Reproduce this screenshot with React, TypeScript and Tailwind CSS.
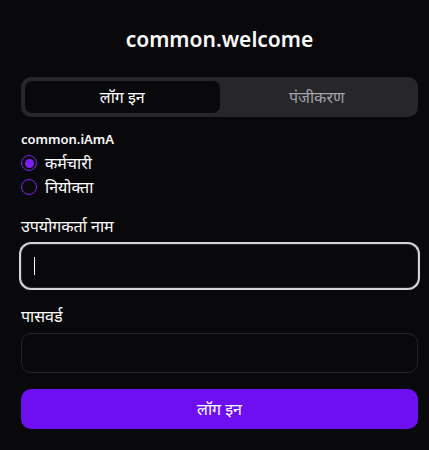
import React from "react";

export default function App() {
  return (
    <div
      className="min-h-[450px] w-full bg-[#09090b] text-white"
      style={{ fontFamily: '"Noto Sans", "Open Sans", sans-serif' }}
    >
      <div className="ml-[21px] w-[397px] pt-[25px]">
        <h1 className="text-center text-[21px] font-semibold leading-[28px] text-[#fafafa]">
          common.welcome
        </h1>
        <div className="mt-[24px] flex h-[40px] rounded-[10px] bg-[#27272a] p-[4px]">
          <div className="flex flex-1 items-center justify-center rounded-[7px] bg-[#09090b] text-[16px] text-white">
            लॉग इन
          </div>
          <div className="flex flex-1 items-center justify-center text-[16px] text-[#a1a1aa]">
            पंजीकरण
          </div>
        </div>
        <div className="mt-[13px] text-[13px] font-semibold leading-[18px] text-[#fafafa]">
          common.iAmA
        </div>
        <div className="mt-[7px] flex flex-col gap-[8px]">
          <label className="flex h-[16px] items-center gap-[8px] text-[16px]">
            <span className="flex h-[16px] w-[16px] items-center justify-center rounded-full border-[1.5px] border-[#7c1ff2]">
              <span className="h-[9px] w-[9px] rounded-full bg-[#7c1ff2]" />
            </span>
            कर्मचारी
          </label>
          <label className="flex h-[16px] items-center gap-[8px] text-[16px]">
            <span className="h-[16px] w-[16px] rounded-full border-[1.5px] border-[#7c1ff2]" />
            नियोक्ता
          </label>
        </div>
        <div className="mt-[21px] text-[16px] leading-[20px]">उपयोगकर्ता नाम</div>
        <div className="mt-[8px] flex h-[44px] items-center rounded-[10px] border border-[#27272a] bg-[#09090b] px-[12px] ring-2 ring-[#d4d4d8]">
          <span className="h-[18px] w-[1px] bg-white" />
        </div>
        <div className="mt-[18px] text-[16px] leading-[20px]">पासवर्ड</div>
        <div className="mt-[7px] h-[40px] rounded-[10px] border border-[#27272a] bg-[#09090b]" />
        <button className="mt-[16px] flex h-[40px] w-full items-center justify-center rounded-[10px] bg-[#6e0ff2] text-[16px] text-white">
          लॉग इन
        </button>
      </div>
    </div>
  );
}
